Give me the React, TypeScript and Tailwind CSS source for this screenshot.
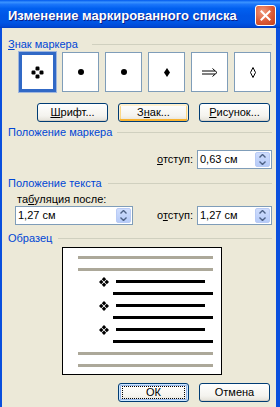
import type { ReactNode } from "react";

const font = "font-['Liberation_Sans',Arial,sans-serif]";

function GroupTitle({ children, gap = "ml-[6px]" }: { children: ReactNode; gap?: string }) {
  return (
    <div className="flex h-[13px] items-center pl-[6px] pr-[4px]">
      <span className="leading-[13px] text-[#0046D5]">{children}</span>
      <div className={`h-px flex-1 bg-[#D0D0BF] ${gap}`} />
    </div>
  );
}

function Btn({ children, kind = "normal" }: { children: ReactNode; kind?: "normal" | "hot" | "default" }) {
  const ring =
    kind === "hot"
      ? "shadow-[inset_0_1px_0_1px_#FFF0CF,inset_0_-1px_0_1px_#F8B330,inset_1px_0_0_1px_#FBD888,inset_-1px_0_0_1px_#FBD888]"
      : kind === "default"
        ? "shadow-[inset_0_0_0_1px_#CEE7FF,inset_0_0_0_2px_#98B8EA]"
        : "shadow-[inset_0_-1px_0_#D6D0C5]";
  return (
    <div
      className={`flex h-[19px] w-[71px] items-center justify-center rounded-[3px] border border-[#003C74] bg-[linear-gradient(to_bottom,#FFFFFF,#F4F3EE_70%,#E3E1D8)] ${ring}`}
    >
      {kind === "default" ? (
        <span className="flex h-[13px] w-[63px] items-center justify-center border border-dotted border-black leading-none">
          {children}
        </span>
      ) : (
        <span className="leading-none">{children}</span>
      )}
    </div>
  );
}

function SpinArrows() {
  return (
    <div className="mr-[1px] flex h-[15px] w-[15px] flex-col items-center justify-center gap-[3px] rounded-[2px] border border-[#B9CBF5] bg-[linear-gradient(to_bottom,#CFDDFD,#B6CBF8)]">
      <svg width="7" height="4" viewBox="0 0 7 4">
        <path d="M0.5 3.5 L3.5 0.5 L6.5 3.5" fill="none" stroke="#4D6185" strokeWidth="1.4" />
      </svg>
      <svg width="7" height="4" viewBox="0 0 7 4">
        <path d="M0.5 0.5 L3.5 3.5 L6.5 0.5" fill="none" stroke="#4D6185" strokeWidth="1.4" />
      </svg>
    </div>
  );
}

function Spin({ value, width }: { value: string; width: string }) {
  return (
    <div className={`flex h-[19px] items-center border border-[#7F9DB9] bg-white ${width}`}>
      <span className="flex-1 pl-[2px] leading-none">{value}</span>
      <SpinArrows />
    </div>
  );
}

function FourDiamonds() {
  return (
    <svg width="10" height="10" viewBox="0 0 10 10" className="shrink-0">
      <path d="M5 0 L7.2 2.2 L5 4.4 L2.8 2.2 Z" fill="black" />
      <path d="M7.8 2.8 L10 5 L7.8 7.2 L5.6 5 Z" fill="black" />
      <path d="M5 5.6 L7.2 7.8 L5 10 L2.8 7.8 Z" fill="black" />
      <path d="M2.2 2.8 L4.4 5 L2.2 7.2 L0 5 Z" fill="black" />
      <rect x="4.5" y="4.5" width="1" height="1" fill="white" />
    </svg>
  );
}

function BulletBox({ selected, children }: { selected?: boolean; children: ReactNode }) {
  return (
    <div
      className={`flex h-[40px] w-[37px] items-center justify-center bg-white ${
        selected ? "border-[3px] border-[#3169C6] shadow-[0_0_0_1px_#9FB6DE]" : "border border-[#7F9DB9]"
      }`}
    >
      {children}
    </div>
  );
}

function Line({ color, width, left }: { color: string; width: string; left: string }) {
  return <div className={`h-[3px] ${color} ${width} ${left}`} />;
}

export default function App() {
  return (
    <div className={`flex h-[407px] w-[280px] flex-col overflow-hidden text-[11px] text-black ${font}`}>
      {/* title bar */}
      <div className="flex h-[28px] shrink-0 items-center justify-between bg-[linear-gradient(to_bottom,#0058EE_0%,#3A93FF_8%,#1A75FA_16%,#0160F0_30%,#0056E6_55%,#0055E4_80%,#0049D6_94%,#003DC0_100%)] pl-[8px] pr-[4px] pt-[3px]">
        <span className="text-[13px] font-bold leading-none text-white [text-shadow:1px_1px_0_#0A1E8A]">
          Изменение маркированного списка
        </span>
        <div className="flex h-[21px] w-[21px] items-center justify-center rounded-[3px] border border-white bg-[radial-gradient(circle_at_35%_30%,#F09A7E,#DC5A36_55%,#C2401B)]">
          <svg width="11" height="11" viewBox="0 0 11 11">
            <path d="M1.5 1.5 L9.5 9.5 M9.5 1.5 L1.5 9.5" stroke="white" strokeWidth="2" strokeLinecap="square" />
          </svg>
        </div>
      </div>

      {/* body */}
      <div className="flex flex-1 flex-col border-l-[2px] border-r-[4px] border-l-[#0A4FDD] border-r-[#0A4FDD] bg-[#ECE9D8] pt-[10px]">
        <GroupTitle gap="ml-[14px]">
          <span className="underline">З</span>нак маркера
        </GroupTitle>

        <div className="mt-[1px] flex gap-[6px] pl-[17px]">
          <BulletBox selected>
            <svg width="13" height="13" viewBox="0 0 13 13">
              <rect x="4.5" y="0.5" width="4" height="4" rx="1.2" fill="black" />
              <rect x="8.5" y="4.5" width="4" height="4" rx="1.2" fill="black" />
              <rect x="4.5" y="8.5" width="4" height="4" rx="1.2" fill="black" />
              <rect x="0.5" y="4.5" width="4" height="4" rx="1.2" fill="black" />
            </svg>
          </BulletBox>
          <BulletBox>
            <div className="mb-[1px] h-[6px] w-[6px] rounded-full bg-black" />
          </BulletBox>
          <BulletBox>
            <div className="h-[6px] w-[6px] rounded-full bg-black" />
          </BulletBox>
          <BulletBox>
            <svg width="6" height="9" viewBox="0 0 6 9">
              <path d="M3 0 L6 4.5 L3 9 L0 4.5 Z" fill="black" />
            </svg>
          </BulletBox>
          <BulletBox>
            <svg width="16" height="9" viewBox="0 0 16 9">
              <path d="M0 3 H13 M0 6 H13" stroke="black" strokeWidth="1" />
              <path d="M10.5 0.5 L15 4.5 L10.5 8.5" fill="none" stroke="black" strokeWidth="1" />
            </svg>
          </BulletBox>
          <BulletBox>
            <svg width="6" height="11" viewBox="0 0 6 11">
              <path d="M3 0.5 L5.5 5.5 L3 10.5 L0.5 5.5 Z" fill="none" stroke="black" strokeWidth="1" />
            </svg>
          </BulletBox>
        </div>

        <div className="mt-[11px] flex gap-[10px] pl-[35px]">
          <Btn>
            <span className="underline">Ш</span>рифт...
          </Btn>
          <Btn kind="hot">
            З<span className="underline">н</span>ак...
          </Btn>
          <Btn>
            <span className="underline">Р</span>исунок...
          </Btn>
        </div>

        <div className="mt-[4px]">
          <GroupTitle gap="ml-[5px]">Положение маркера</GroupTitle>
        </div>

        <div className="mt-[11px] flex items-center justify-end gap-[4px] pr-[4px]">
          <span>
            <span className="underline">о</span>тступ:
          </span>
          <Spin value="0,63 см" width="w-[75px]" />
        </div>

        <div className="mt-[8px]">
          <GroupTitle>Положение текста</GroupTitle>
        </div>

        <div className="mt-[3px] h-[13px] pl-[15px] leading-[13px]">
          та<span className="underline">б</span>уляция после:
        </div>

        <div className="flex items-center pl-[13px] pr-[4px]">
          <Spin value="1,27 см" width="w-[118px]" />
          <div className="ml-auto flex items-center gap-[4px]">
            <span>
              о<span className="underline">т</span>ступ:
            </span>
            <Spin value="1,27 см" width="w-[75px]" />
          </div>
        </div>

        <div className="mt-[7px]">
          <GroupTitle>Образец</GroupTitle>
        </div>

        <div className="ml-[60px] mt-[2px] flex h-[128px] w-[160px] flex-col gap-[9px] border border-black bg-white pl-[15px] pt-[8px]">
          <Line color="bg-[#ACA899]" width="w-[135px]" left="" />
          <Line color="bg-[#ACA899]" width="w-[135px]" left="" />
          {[0, 1, 2].map((i) => (
            <div key={i} className="contents">
              <div className="flex h-[3px] items-center pl-[21px]">
                <FourDiamonds />
                <div className="ml-[7px] h-[3px] w-[89px] bg-black" />
              </div>
              <Line color="bg-black" width="w-[100px]" left="ml-[35px]" />
            </div>
          ))}
          <Line color="bg-[#ACA899]" width="w-[135px]" left="" />
          <Line color="bg-[#ACA899]" width="w-[135px]" left="" />
        </div>

        <div className="mt-[8px] flex justify-end gap-[10px] pr-[6px]">
          <Btn kind="default">ОК</Btn>
          <Btn>Отмена</Btn>
        </div>
      </div>
    </div>
  );
}
